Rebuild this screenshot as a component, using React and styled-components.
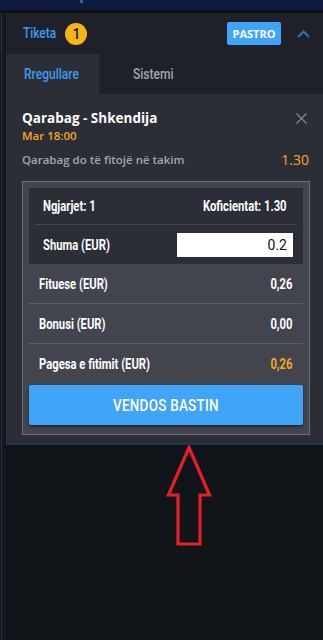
import React from 'react'
import styled, { createGlobalStyle } from 'styled-components'

const GlobalStyle = createGlobalStyle`
  html, body {
    margin: 0;
    padding: 0;
    background: #111418;
    font-family: "Open Sans", "Noto Sans", sans-serif;
  }
`

const rows = [
  { label: 'Fituese (EUR)', value: '0,26' },
  { label: 'Bonusi (EUR)', value: '0,00' },
  { label: 'Pagesa e fitimit (EUR)', value: '0,26', accent: true },
]

const ChevronUp = () => (
  <svg width="13" height="8" viewBox="0 0 13 8" fill="none">
    <path d="M1 7L6.5 1.5L12 7" stroke="#3b6fa0" strokeWidth="2" />
  </svg>
)

const CloseIcon = () => (
  <svg width="11" height="11" viewBox="0 0 11 11" fill="none">
    <path d="M0.5 0.5L10.5 10.5M10.5 0.5L0.5 10.5" stroke="#8a8d93" strokeWidth="1.1" />
  </svg>
)

const Arrow = () => (
  <svg width="48" height="102" viewBox="0 0 48 102" fill="none">
    <path
      d="M24 2.5L44.5 50H35V99H13V50H3.5Z"
      stroke="#e61e28"
      strokeWidth="3.2"
      strokeLinejoin="miter"
    />
  </svg>
)

export default function App() {
  return (
    <>
      <GlobalStyle />
      <Page>
        <TopBar><TopMark /></TopBar>
        <Main>
          <LeftRail />
          <Column>
            <Panel>
              <Header>
                <Title>Tiketa</Title>
                <Badge>1</Badge>
                <Spacer />
                <ClearButton>PASTRO</ClearButton>
                <IconButton><ChevronUp /></IconButton>
              </Header>
              <Tabs>
                <Tab $active>
                  <TabText $active>Rregullare</TabText>
                </Tab>
                <Tab>
                  <TabText>Sistemi</TabText>
                </Tab>
              </Tabs>
              <Content>
                <EventHead>
                  <EventName>Qarabag - Shkendija</EventName>
                  <IconButton $small><CloseIcon /></IconButton>
                </EventHead>
                <EventTime>Mar 18:00</EventTime>
                <PickRow>
                  <PickLabel>Qarabag do të fitojë në takim</PickLabel>
                  <PickOdd>1.30</PickOdd>
                </PickRow>
                <SlipBox>
                  <SlipTop>
                    <TopRow $divided>
                      <Cond>Ngjarjet: 1</Cond>
                      <Cond $right>Koficientat: 1.30</Cond>
                    </TopRow>
                    <TopRow $tall>
                      <Cond>Shuma (EUR)</Cond>
                      <AmountInput defaultValue="0.2" />
                    </TopRow>
                  </SlipTop>
                  {rows.map((r, i) => (
                    <SumRow key={r.label} $last={i === rows.length - 1}>
                      <Cond>{r.label}</Cond>
                      <Cond $right $accent={r.accent}>{r.value}</Cond>
                    </SumRow>
                  ))}
                  <PlaceButton>
                    <ButtonText>VENDOS BASTIN</ButtonText>
                  </PlaceButton>
                </SlipBox>
              </Content>
            </Panel>
            <ArrowWrap><Arrow /></ArrowWrap>
          </Column>
        </Main>
      </Page>
    </>
  )
}

const Page = styled.div`
  width: 323px;
  height: 640px;
  overflow: hidden;
  background: #111418;
  display: flex;
  flex-direction: column;
`

const TopBar = styled.div`
  height: 10px;
  background: #0f1b3e;
  border-bottom: 3px solid #0d1014;
  display: flex;
`

const TopMark = styled.div`
  width: 3px;
  height: 3px;
  margin-left: 80px;
  background: #2d5fae;
`

const Main = styled.div`
  flex: 1;
  display: flex;
`

const LeftRail = styled.div`
  width: 6px;
  background: linear-gradient(to right, #151a22 0 1px, #25303e 1px 2px, #15181d 2px 6px);
`

const Column = styled.div`
  flex: 1;
  display: flex;
  flex-direction: column;
`

const Panel = styled.div`
  background: #2b2e36;
  border-bottom: 2px solid #173a52;
`

const Header = styled.div`
  height: 41px;
  background: #1e2129;
  display: flex;
  align-items: center;
  padding: 0 12px 0 17px;
`

const Title = styled.span`
  display: inline-block;
  color: #3d9bf0;
  font-family: "Roboto", sans-serif;
  font-size: 14.5px;
  font-weight: 500;
  transform: scaleX(0.82);
  transform-origin: left center;
`

const Badge = styled.span`
  width: 22px;
  height: 22px;
  border-radius: 50%;
  background: #f7b41d;
  color: #1a1a1a;
  font-family: "Roboto", sans-serif;
  font-size: 14px;
  font-weight: 500;
  display: flex;
  align-items: center;
  justify-content: center;
  margin-left: 2px;
`

const Spacer = styled.div`
  flex: 1;
`

const ClearButton = styled.button`
  height: 23px;
  width: 54px;
  border: 0;
  border-radius: 2px;
  background: #40a4f8;
  color: #fff;
  font-family: "Open Sans", sans-serif;
  font-size: 11px;
  font-weight: 700;
  padding: 0;
`

const IconButton = styled.button`
  border: 0;
  background: none;
  padding: 0;
  margin-left: ${p => (p.$small ? '0' : '14px')};
  margin-right: ${p => (p.$small ? '3px' : '0')};
  width: ${p => (p.$small ? '11px' : '16px')};
  display: flex;
  align-items: center;
  justify-content: center;
`

const Tabs = styled.div`
  height: 40px;
  display: flex;
  background: #1e2129;
`

const Tab = styled.div`
  width: ${p => (p.$active ? '93px' : 'auto')};
  padding-left: ${p => (p.$active ? '18px' : '34px')};
  box-sizing: border-box;
  background: ${p => (p.$active ? '#2b2e36' : 'transparent')};
  display: flex;
  align-items: center;
`

const TabText = styled.span`
  display: inline-block;
  color: ${p => (p.$active ? '#3d9bf0' : '#a3a6ad')};
  font-family: "Roboto", sans-serif;
  font-size: 14px;
  font-weight: 500;
  transform: scaleX(0.86);
  transform-origin: left center;
  white-space: nowrap;
`

const Content = styled.div`
  padding: 15px 13px 8px 16px;
`

const EventHead = styled.div`
  display: flex;
  align-items: center;
  justify-content: space-between;
  height: 18px;
`

const EventName = styled.span`
  color: #fff;
  font-size: 13.5px;
  font-weight: 700;
`

const EventTime = styled.div`
  color: #f5a623;
  font-size: 11.5px;
  font-weight: 600;
  margin-top: 1px;
  line-height: 16px;
`

const PickRow = styled.div`
  display: flex;
  justify-content: space-between;
  align-items: center;
  margin-top: 5px;
  height: 20px;
`

const PickLabel = styled.span`
  color: #a3a6ad;
  font-size: 11.5px;
  font-weight: 600;
`

const PickOdd = styled.span`
  color: #f5a623;
  font-size: 14px;
  margin-right: 1px;
`

const SlipBox = styled.div`
  margin-top: 12px;
  border: 1px solid #6b6e75;
  background: #42454e;
  padding: 6px 6px 9px;
`

const SlipTop = styled.div`
  background: #2b2e36;
  padding: 0 6px;
`

const TopRow = styled.div`
  height: ${p => (p.$tall ? '39px' : '36px')};
  display: flex;
  align-items: center;
  justify-content: space-between;
  padding: 0 10px 0 8px;
  border-bottom: ${p => (p.$divided ? '1px solid #464952' : '0')};
`

const Cond = styled.span`
  display: inline-block;
  white-space: nowrap;
  font-family: "Roboto", sans-serif;
  font-size: 15px;
  font-weight: 700;
  color: ${p => (p.$accent ? '#f5a623' : '#fff')};
  transform: scaleX(0.75);
  transform-origin: ${p => (p.$right ? 'right' : 'left')} center;
`

const AmountInput = styled.input`
  width: 116px;
  height: 24px;
  box-sizing: border-box;
  border: 0;
  background: #fff;
  color: #111;
  text-align: right;
  font-family: "Roboto", sans-serif;
  font-size: 14px;
  padding: 0 6px;
  margin-right: -6px;
  outline: none;
`

const SumRow = styled.div`
  height: ${p => (p.$last ? '40px' : '39px')};
  display: flex;
  align-items: center;
  justify-content: space-between;
  padding: 0 10px;
  border-bottom: ${p => (p.$last ? '0' : '1px solid #5b5e65')};
`

const PlaceButton = styled.button`
  width: 100%;
  height: 40px;
  margin-top: 1px;
  border: 0;
  border-radius: 2px;
  background: #40a4f8;
  box-shadow: 0 2px 3px rgba(0, 0, 0, 0.45);
  display: flex;
  align-items: center;
  justify-content: center;
  padding: 0;
`

const ButtonText = styled.span`
  display: inline-block;
  color: #fff;
  font-family: "Roboto", sans-serif;
  font-size: 16px;
  font-weight: 500;
  letter-spacing: 0.3px;
  transform: scaleX(0.84);
`

const ArrowWrap = styled.div`
  padding: 0 0 0 159px;
`
